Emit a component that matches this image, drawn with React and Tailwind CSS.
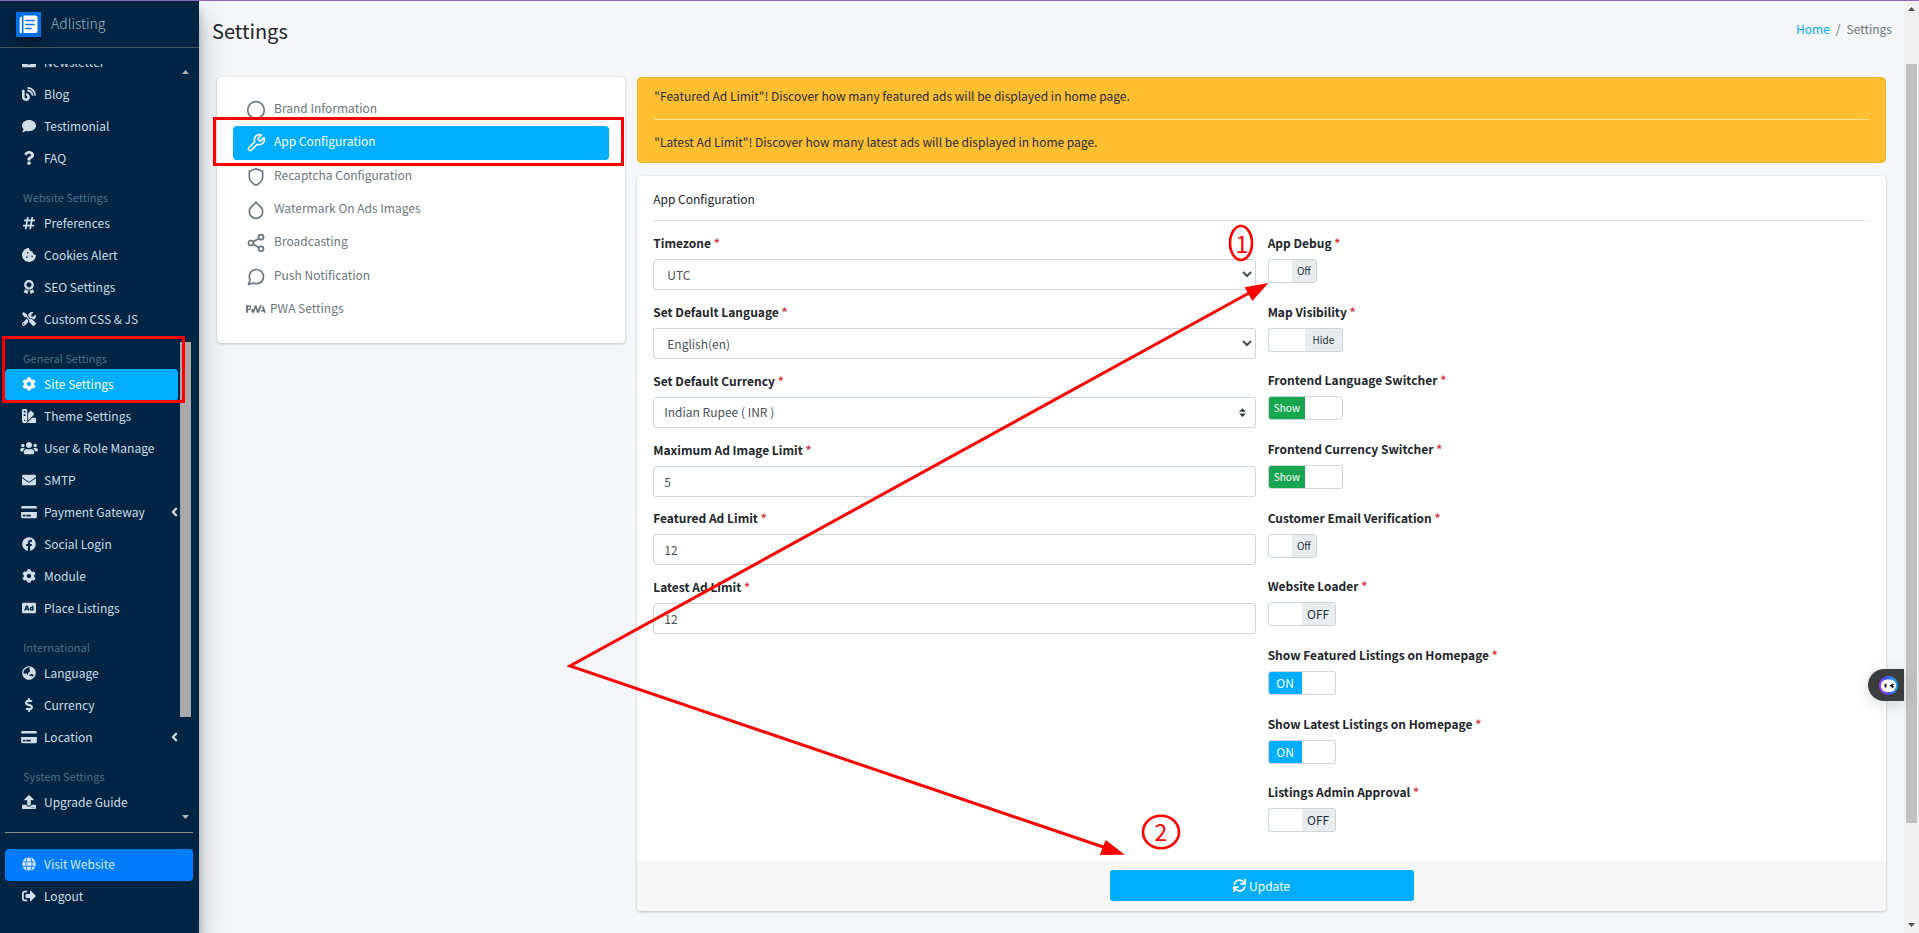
import React, { useState } from "react";
import {
  FaEnvelope, FaBlog, FaComment, FaQuestion, FaHashtag, FaCookieBite, FaAward, FaTools, FaCog,
  FaSwatchbook, FaUsers, FaCreditCard, FaFacebook, FaAd, FaGlobeAsia, FaDollarSign, FaUpload,
  FaGlobe, FaSignOutAlt, FaAngleLeft, FaSync,
} from "react-icons/fa";
import { FiCircle, FiTool, FiShield, FiDroplet, FiShare2, FiMessageCircle } from "react-icons/fi";
import { SiPwa } from "react-icons/si";

const NAV = [
  {
    items: [
      { icon: FaEnvelope, text: "Newsletter" },
      { icon: FaBlog, text: "Blog" },
      { icon: FaComment, text: "Testimonial" },
      { icon: FaQuestion, text: "FAQ" },
    ],
  },
  {
    title: "Website Settings",
    items: [
      { icon: FaHashtag, text: "Preferences" },
      { icon: FaCookieBite, text: "Cookies Alert" },
      { icon: FaAward, text: "SEO Settings" },
      { icon: FaTools, text: "Custom CSS & JS" },
    ],
  },
  {
    title: "General Settings",
    items: [
      { icon: FaCog, text: "Site Settings", active: true },
      { icon: FaSwatchbook, text: "Theme Settings" },
      { icon: FaUsers, text: "User & Role Manage", iconSize: "w-[18px]" },
      { icon: FaEnvelope, text: "SMTP" },
      { icon: FaCreditCard, text: "Payment Gateway", iconSize: "w-4", more: true },
      { icon: FaFacebook, text: "Social Login" },
      { icon: FaCog, text: "Module" },
      { icon: FaAd, text: "Place Listings" },
    ],
  },
  {
    title: "International",
    items: [
      { icon: FaGlobeAsia, text: "Language" },
      { icon: FaDollarSign, text: "Currency" },
      { icon: FaCreditCard, text: "Location", iconSize: "w-4", more: true },
    ],
  },
  { title: "System Settings", items: [{ icon: FaUpload, text: "Upgrade Guide" }] },
];

const TABS = [
  { icon: FiCircle, text: "Brand Information" },
  { icon: FiTool, text: "App Configuration", active: true },
  { icon: FiShield, text: "Recaptcha Configuration" },
  { icon: FiDroplet, text: "Watermark On Ads Images" },
  { icon: FiShare2, text: "Broadcasting" },
  { icon: FiMessageCircle, text: "Push Notification" },
  { icon: SiPwa, text: "PWA Settings", brand: true },
];

const SWITCHES = [
  { id: "debug", text: "App Debug", off: "Off", size: "w-[49px] text-[10px]" },
  { id: "map", text: "Map Visibility", off: "Hide", size: "w-[75px] text-[10px]" },
  { id: "lang-switch", text: "Frontend Language Switcher", on: "Show", size: "w-[75px] text-[10px]", tone: "bg-[#18a550]" },
  { id: "cur-switch", text: "Frontend Currency Switcher", on: "Show", size: "w-[75px] text-[10px]", tone: "bg-[#18a550]" },
  { id: "email", text: "Customer Email Verification", off: "Off", size: "w-[49px] text-[10px]" },
  { id: "loader", text: "Website Loader", off: "OFF", size: "w-[68px]" },
  { id: "featured", text: "Show Featured Listings on Homepage", on: "ON", size: "w-[68px]", tone: "bg-[#00adff]" },
  { id: "latest", text: "Show Latest Listings on Homepage", on: "ON", size: "w-[68px]", tone: "bg-[#00adff]" },
  { id: "approval", text: "Listings Admin Approval", off: "OFF", size: "w-[68px]" },
];

function NavLink({ icon: Icon, text, active, more, tone, iconSize = "w-3.5" }) {
  const look = active ? "bg-[#00adff] text-white" : tone || "text-[#d3dde8]";
  return (
    <a href="#" className={"flex h-8 items-center rounded pb-0.5 pl-4 " + look}>
      <span className="flex w-4 shrink-0 justify-center"><Icon className={"h-3.5 shrink-0 " + iconSize} /></span>
      <span className="ml-[7px] whitespace-nowrap">{text}</span>
      {more && <FaAngleLeft className="ml-auto h-3.5 w-[7px]" />}
    </a>
  );
}

function Arrow({ down, className = "" }) {
  return (
    <svg viewBox="0 0 7 4" className={"h-1 w-[7px] " + className} fill="currentColor" aria-hidden="true">
      <path d={down ? "M0 0h7L3.500 4z" : "M0 4h7L3.500 0z"} />
    </svg>
  );
}

function Sidebar() {
  return (
    <aside className="relative z-10 flex w-[199px] shrink-0 flex-col bg-[#002443] shadow-[0_14px_28px_rgba(0,0,0,0.25),0_10px_10px_rgba(0,0,0,0.22)]">
      <a href="#" className="flex h-[47px] items-center border-b border-[#4b545c] pl-4 text-sm text-[#a5b4c3]">
        <svg viewBox="0 0 25 25" className="h-[25px] w-[25px] shadow-[0_6px_8px_rgba(0,0,0,0.35)]" aria-hidden="true">
          <rect width="25" height="25" fill="#0570e6" />
          <path d="M7.500 3.500h12a2 2 0 0 1 2 2v13.500a2 2 0 0 1-2 2h-12z" fill="#fff" />
          <path d="M5.800 4.200 3.700 6v15l2.100.5z" fill="#fff" />
          <path d="M10 8.500h8M10 12.500h8M10 16.500h5" stroke="#0570e6" strokeWidth="1.600" strokeLinecap="round" />
        </svg>
        <span className="ml-[10px] pb-0.5 font-light">Adlisting</span>
      </a>
      <div className="mt-4 flex h-[762px] overflow-hidden pl-[5px]">
        <nav className="-mt-[17px] w-[173px]">
          {NAV.map((group, i) => (
            <div key={i}>
              {group.title && <h2 className="flex h-[33px] items-center pl-[18px] pt-2.5 text-[11px] text-[#536d85]">{group.title}</h2>}
              {group.items.map((item) => <NavLink key={item.text} {...item} />)}
            </div>
          ))}
        </nav>
        <div className="flex w-[15px] flex-col items-center pt-1.5 text-[#b3b3b3]">
          <Arrow />
          <div className="mt-[268px] h-[375px] w-[11px] bg-[#a9a9a9]" />
          <Arrow down className="mt-[98px]" />
        </div>
      </div>
      <div className="mx-[5px] mr-1.5 mt-1.5 border-t border-[#8a8a8a] pt-4">
        <NavLink icon={FaGlobe} text="Visit Website" tone="bg-[#007dff] text-[#d9eaff]" />
        <NavLink icon={FaSignOutAlt} text="Logout" />
      </div>
    </aside>
  );
}

function Title({ id, children }) {
  return (
    <label htmlFor={id} className="mb-1.5 block h-[21px] font-bold leading-[21px] text-[#212529]">
      {children} <span className="text-[#dc3545]">*</span>
    </label>
  );
}

const FIELD = "block h-[31px] w-full rounded-[3px] border border-[#ced4da] bg-white text-[#495057]";

function Switch({ id, text, on, off, size, tone }) {
  const [checked, setChecked] = useState(Boolean(on));
  return (
    <div>
      <Title id={id}>{text}</Title>
      <label className={"relative flex h-6 overflow-hidden rounded-[3px] border border-[#ced4da] leading-[22px] " + size}>
        <input id={id} type="checkbox" className="sr-only" checked={checked} onChange={(e) => setChecked(e.target.checked)} />
        <span className={"flex-1 text-center text-white " + (checked ? tone || "bg-[#00adff]" : "")}>{checked ? on || "On" : ""}</span>
        <span className={"flex-1 text-center text-[#1f2d3d] " + (checked ? "" : "bg-[#e9ecef]")}>{checked ? "" : off || "Off"}</span>
      </label>
    </div>
  );
}

function Notes() {
  return (
    <>
      <div className="pointer-events-none absolute left-[2px] top-[335px] z-20 h-[67px] w-[183px] border-3 border-[#f00]" />
      <div className="pointer-events-none absolute left-[213px] top-[116px] z-20 h-[49px] w-[411px] border-3 border-[#f00]" />
      <svg viewBox="0 0 1919 933" className="pointer-events-none absolute left-0 -top-px z-20 h-[933px] w-[1919px]" fill="none" stroke="#f00" strokeWidth="2.600">
        <path d="M1112 850 570 666 1250 292.500" strokeWidth="3" />
        <path d="M1268.500 283 1244.700 287.300 1252.300 301zM1124.700 854.700 1105.700 840 1099.700 855z" fill="#f00" stroke="none" />
        <ellipse cx="1241" cy="243" rx="11" ry="17" />
        <ellipse cx="1161" cy="832" rx="18" ry="16.300" />
        <g fill="#f00" stroke="none" fontFamily="Noto Sans CJK SC, sans-serif" fontSize="23" textAnchor="middle">
          <text x="1242" y="253">1</text>
          <text x="1161" y="841">2</text>
        </g>
      </svg>
    </>
  );
}

export default function App() {
  return (
    <div className="relative flex min-h-screen overflow-hidden border-t border-[#8c68b4] bg-[#f4f6f9] font-['Noto_Sans_CJK_SC','Noto_Sans',sans-serif] text-xs leading-5 text-[#212529]">
      <Sidebar />
      <main className="min-w-0 flex-1 px-[18px]">
        <header className="-ml-1.5 -mr-1.5 flex h-[76px] justify-between">
          <h1 className="pl-px pt-3 text-xl leading-9">Settings</h1>
          <nav className="flex gap-1.5 pt-[18px] text-[#6c757d]">
            <a href="#" className="text-[#00adff]">Home</a>
            <span>/</span>
            <span>Settings</span>
          </nav>
        </header>
        <div className="grid grid-cols-4 items-start gap-3">
          <section className="rounded bg-white p-4 shadow-[0_0_1px_rgba(0,0,0,0.13),0_1px_3px_rgba(0,0,0,0.2)]">
            <nav className="grid h-[234px] auto-rows-fr">
              {TABS.map(({ icon: Icon, text, active, brand }) => (
                <a key={text} href="#" className={"flex items-center rounded " + (active ? "bg-[#00adff] text-white" : "text-[#6c757d]")}>
                  <Icon className={brand ? "mb-0.5 ml-[13px] mr-1 h-5 w-5" : "ml-[13px] mr-2 h-5 w-5"} strokeWidth={brand ? 0 : 2} />
                  <span className="pb-1">{text}</span>
                </a>
              ))}
            </nav>
          </section>
          <div className="col-span-3">
            <div className="rounded border border-[#edb32d] bg-[#ffbf32] px-4 pb-2.5 pt-2 text-[#1f2d3d]">
              <p className="pb-[13px]">"Featured Ad Limit"! Discover how many featured ads will be displayed in home page.</p>
              <p className="border-t border-[#ffe28d] pt-3">"Latest Ad Limit"! Discover how many latest ads will be displayed in home page.</p>
            </div>
            <form className="mt-[13px] rounded bg-white shadow-[0_0_1px_rgba(0,0,0,0.13),0_1px_3px_rgba(0,0,0,0.2)]" onSubmit={(e) => e.preventDefault()}>
              <h2 className="mx-4 border-b border-[#e0e0e0] pb-[11px] pt-[13px]">App Configuration</h2>
              <div className="grid grid-cols-2 items-start gap-3 px-4 py-[11px]">
                <div className="grid h-[413px] auto-rows-fr">
                  <div>
                    <Title id="tz">Timezone</Title>
                    <select id="tz" className={FIELD + " pl-[9px]"}><option>UTC</option></select>
                  </div>
                  <div>
                    <Title id="language">Set Default Language</Title>
                    <select id="language" className={FIELD + " pl-[9px]"}><option>English(en)</option></select>
                  </div>
                  <div>
                    <Title id="currency">Set Default Currency</Title>
                    <div className="relative">
                      <select id="currency" className={FIELD + " appearance-none pl-2.5"}><option>Indian Rupee ( INR )</option></select>
                      <svg viewBox="0 0 4 5" className="pointer-events-none absolute right-2.5 top-[11px] h-[9px] w-[7px]" fill="#343a40" aria-hidden="true">
                        <path d="M2 0 0 2h4zm0 5L0 3h4z" />
                      </svg>
                    </div>
                  </div>
                  <div>
                    <Title id="max-image">Maximum Ad Image Limit</Title>
                    <input id="max-image" defaultValue="5" className={FIELD + " px-2.5"} />
                  </div>
                  <div>
                    <Title id="featured-limit">Featured Ad Limit</Title>
                    <input id="featured-limit" defaultValue="12" className={FIELD + " px-2.5"} />
                  </div>
                  <div>
                    <Title id="latest-limit">Latest Ad Limit</Title>
                    <input id="latest-limit" defaultValue="12" className={FIELD + " px-2.5"} />
                  </div>
                </div>
                <div className="grid h-[618px] auto-rows-fr">
                  {SWITCHES.map((s) => <Switch key={s.id} {...s} />)}
                </div>
              </div>
              <div className="flex justify-center rounded-b bg-[#f7f7f7] px-4 pb-2.5 pt-[9px]">
                <button type="submit" className="flex h-[31px] w-1/4 items-center justify-center gap-[3px] rounded-[3px] bg-[#00adff] text-white">
                  <FaSync className="h-[13px] w-[13px]" />
                  Update
                </button>
              </div>
            </form>
          </div>
        </div>
      </main>
      <div className="flex w-[15px] shrink-0 flex-col items-center justify-between bg-[#f1f1f1] pb-1.5 pt-1.5 text-[#505050]">
        <Arrow />
        <div className="mb-auto mt-[53px] h-[759px] w-[11px] bg-[#c1c1c1]" />
        <Arrow down />
      </div>
      <button type="button" aria-label="Assistant" className="absolute right-[15px] top-[668px] flex h-8 w-9 items-center rounded-l-full bg-[#3b3d3e] pl-[11px] shadow-[0_4px_16px_rgba(0,0,0,0.15)]">
        <svg viewBox="0 0 19 19" className="h-[19px] w-[19px]" aria-hidden="true">
          <defs>
            <linearGradient id="ring" x1="0" y1="1" x2="1" y2="0.800">
              <stop offset="0" stopColor="#b93ff0" />
              <stop offset="0.500" stopColor="#4b50f5" />
              <stop offset="1" stopColor="#18a5e8" />
            </linearGradient>
          </defs>
          <circle cx="9.500" cy="9.500" r="9.500" fill="url(#ring)" />
          <rect x="2" y="3.500" width="15" height="12.500" rx="6" fill="#fff" />
          <path d="M6.500 7.800v3.800M14.500 8l-2.500 1.800 2.500 1.600" stroke="#222" strokeWidth="2" fill="none" />
        </svg>
      </button>
      <Notes />
    </div>
  );
}
